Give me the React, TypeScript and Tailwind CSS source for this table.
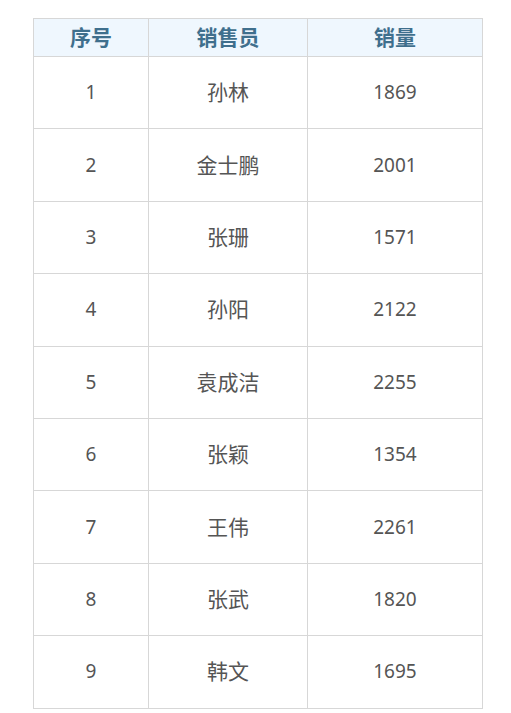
import React from "react";

const rows = [
  { id: 1, name: "孙林", sales: 1869 },
  { id: 2, name: "金士鹏", sales: 2001 },
  { id: 3, name: "张珊", sales: 1571 },
  { id: 4, name: "孙阳", sales: 2122 },
  { id: 5, name: "袁成洁", sales: 2255 },
  { id: 6, name: "张颖", sales: 1354 },
  { id: 7, name: "王伟", sales: 2261 },
  { id: 8, name: "张武", sales: 1820 },
  { id: 9, name: "韩文", sales: 1695 },
];

export default function App() {
  return (
    <div
      className="min-h-[713px] bg-white pt-[18px] pl-[33px]"
      style={{ fontFamily: '"Noto Sans", "Noto Sans CJK SC", sans-serif' }}
    >
      <table className="w-[449px] table-fixed border-collapse text-center">
        <colgroup>
          <col className="w-[115px]" />
          <col className="w-[159px]" />
          <col className="w-[175px]" />
        </colgroup>
        <thead>
          <tr className="h-[38px] bg-[#eff7fe] text-[21px] font-bold text-[#3f6f8d]">
            <th className="border border-[#d7d7d7] p-0 leading-none">序号</th>
            <th className="border border-[#d7d7d7] p-0 leading-none">销售员</th>
            <th className="border border-[#d7d7d7] p-0 leading-none">销量</th>
          </tr>
        </thead>
        <tbody className="text-[#555555]">
          {rows.map((r) => (
            <tr key={r.id} className="h-[72.4px]">
              <td className="border border-[#d7d7d7] p-0 text-[19px] leading-none">{r.id}</td>
              <td className="border border-[#d7d7d7] p-0 text-[21px] leading-none">{r.name}</td>
              <td className="border border-[#d7d7d7] p-0 text-[19px] leading-none">{r.sales}</td>
            </tr>
          ))}
        </tbody>
      </table>
    </div>
  );
}
